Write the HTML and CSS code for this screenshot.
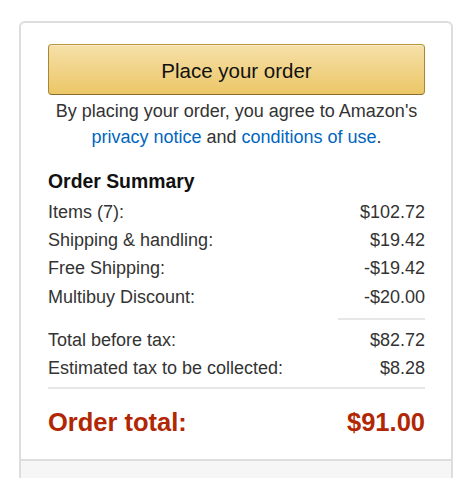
FILE: index.html
```html
<!DOCTYPE html>
<html>
<head>
<meta charset="utf-8">
<link rel="stylesheet" href="styles.css">
</head>
<body>
<div class="card">
  <div class="card-inner">
    <button class="place-btn">Place your order</button>
    <p class="legal">By placing your order, you agree to Amazon's <a href="#">privacy notice</a> and <a href="#">conditions of use</a>.</p>
    <h3 class="summary-title">Order Summary</h3>
    <div class="row"><span>Items (7):</span><span>$102.72</span></div>
    <div class="row"><span>Shipping &amp; handling:</span><span>$19.42</span></div>
    <div class="row"><span>Free Shipping:</span><span>-$19.42</span></div>
    <div class="row"><span>Multibuy Discount:</span><span>-$20.00</span></div>
    <div class="short-rule"></div>
    <div class="row"><span>Total before tax:</span><span>$82.72</span></div>
    <div class="row"><span>Estimated tax to be collected:</span><span>$8.28</span></div>
    <div class="full-rule"></div>
    <div class="total-row"><span>Order total:</span><span>$91.00</span></div>
  </div>
  <div class="card-footer"></div>
</div>
</body>
</html>
```

FILE: styles.css
```css
html, body {
  margin: 0;
  padding: 0;
  background: #fff;
}
body {
  font-family: "Liberation Sans", Arial, sans-serif;
  color: #333;
  overflow: hidden;
}
.card {
  margin: 21px 0 0 19px;
  width: 434px;
  box-sizing: border-box;
  border: 2px solid #dddddd;
  border-radius: 6px;
  overflow: hidden;
}
.card-inner {
  padding: 21px 26px 21px 27px;
}
.place-btn {
  display: block;
  width: 100%;
  height: 51px;
  box-sizing: border-box;
  border: 1px solid;
  border-color: #b8963e #a88734 #8a6d2b;
  border-radius: 4px;
  background: linear-gradient(to bottom, #f6e0a9, #ecc767);
  box-shadow: inset 0 1px 0 rgba(255,255,255,0.4);
  font-family: "Liberation Sans", Arial, sans-serif;
  font-size: 20.5px;
  color: #111;
  padding: 2px 0 0;
  margin: 0;
}
.legal {
  margin: 4px 0 0;
  text-align: center;
  font-size: 18px;
  line-height: 25.5px;
  color: #333;
}
.legal a {
  color: #0066c0;
  text-decoration: none;
}
.summary-title {
  margin: 18px 0 4px;
  font-size: 19.4px;
  line-height: 26px;
  font-weight: bold;
  color: #111;
}
.row {
  display: flex;
  justify-content: space-between;
  font-size: 18px;
  line-height: 28.2px;
  color: #333;
}
.short-rule {
  margin: 7px 0 6px auto;
  width: 87px;
  height: 2px;
  background: #e7e7e7;
}
.full-rule {
  margin: 5px 0 17px;
  height: 2px;
  background: #e7e7e7;
}
.total-row {
  display: flex;
  justify-content: space-between;
  font-size: 25.5px;
  line-height: 32px;
  font-weight: bold;
  color: #b12704;
}
.card-footer {
  border-top: 2px solid #dddddd;
  background: #f6f6f6;
  height: 60px;
}
```
